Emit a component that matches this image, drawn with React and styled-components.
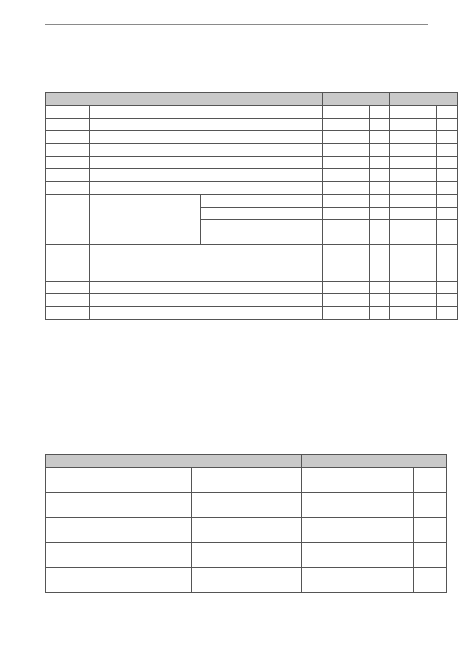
import React from "react";
import styled, { createGlobalStyle } from "styled-components";

const Global = createGlobalStyle`
  html, body { margin: 0; padding: 0; background: #fff; }
  body { font-family: "Liberation Sans", Arial, sans-serif; }
`;

const Page = styled.div`
  width: 474px;
  height: 670px;
  box-sizing: border-box;
  padding: 24px 0 0 45px;
  background: #fff;
`;

const HeaderRule = styled.div`
  width: 383px;
  height: 0;
  border-top: 1px solid #8a8a8a;
`;

const Table = styled.table`
  border-collapse: collapse;
  table-layout: fixed;
  width: ${(p) => p.$w}px;
  margin-top: ${(p) => p.$mt}px;
`;

const Cell = styled.td`
  border: 1px solid #555;
  padding: 0;
  height: ${(p) => p.$h}px;
  background: #fff;
`;

const HeadCell = styled.th`
  border: 1px solid #555;
  padding: 0;
  height: 12px;
  background: #c9c9c9;
`;

function Row7({ h }) {
  return (
    <tr>
      <Cell $h={h} />
      <Cell $h={h} colSpan={2} />
      <Cell $h={h} />
      <Cell $h={h} />
      <Cell $h={h} />
      <Cell $h={h} />
    </tr>
  );
}

function Quad({ h }) {
  return (
    <>
      <Cell $h={h} />
      <Cell $h={h} />
      <Cell $h={h} />
      <Cell $h={h} />
    </>
  );
}

export default function App() {
  const t1cols = [44, 111, 122, 47, 20, 47, 21];
  const t2cols = [146, 110, 112, 33];
  return (
    <>
      <Global />
      <Page>
        <HeaderRule />
        <Table $w={412} $mt={67}>
          <colgroup>
            {t1cols.map((w, i) => (
              <col key={i} style={{ width: w }} />
            ))}
          </colgroup>
          <thead>
            <tr>
              <HeadCell colSpan={3} />
              <HeadCell colSpan={2} />
              <HeadCell colSpan={2} />
            </tr>
          </thead>
          <tbody>
            {[0, 1, 2, 3, 4, 5, 6].map((i) => (
              <Row7 key={i} h={11.7} />
            ))}
            <tr>
              <Cell $h={11.7} rowSpan={3} />
              <Cell $h={11.7} rowSpan={3} />
              <Cell $h={11.7} />
              <Quad h={11.7} />
            </tr>
            <tr>
              <Cell $h={11.3} />
              <Quad h={11.3} />
            </tr>
            <tr>
              <Cell $h={24} />
              <Quad h={24} />
            </tr>
            <Row7 h={36} />
            {[0, 1, 2].map((i) => (
              <Row7 key={i} h={11.7} />
            ))}
          </tbody>
        </Table>
        <Table $w={401} $mt={134}>
          <colgroup>
            {t2cols.map((w, i) => (
              <col key={i} style={{ width: w }} />
            ))}
          </colgroup>
          <thead>
            <tr>
              <HeadCell colSpan={2} />
              <HeadCell colSpan={2} />
            </tr>
          </thead>
          <tbody>
            {[0, 1, 2, 3, 4].map((i) => (
              <tr key={i}>
                <Cell $h={24} />
                <Cell $h={24} />
                <Cell $h={24} />
                <Cell $h={24} />
              </tr>
            ))}
          </tbody>
        </Table>
      </Page>
    </>
  );
}
